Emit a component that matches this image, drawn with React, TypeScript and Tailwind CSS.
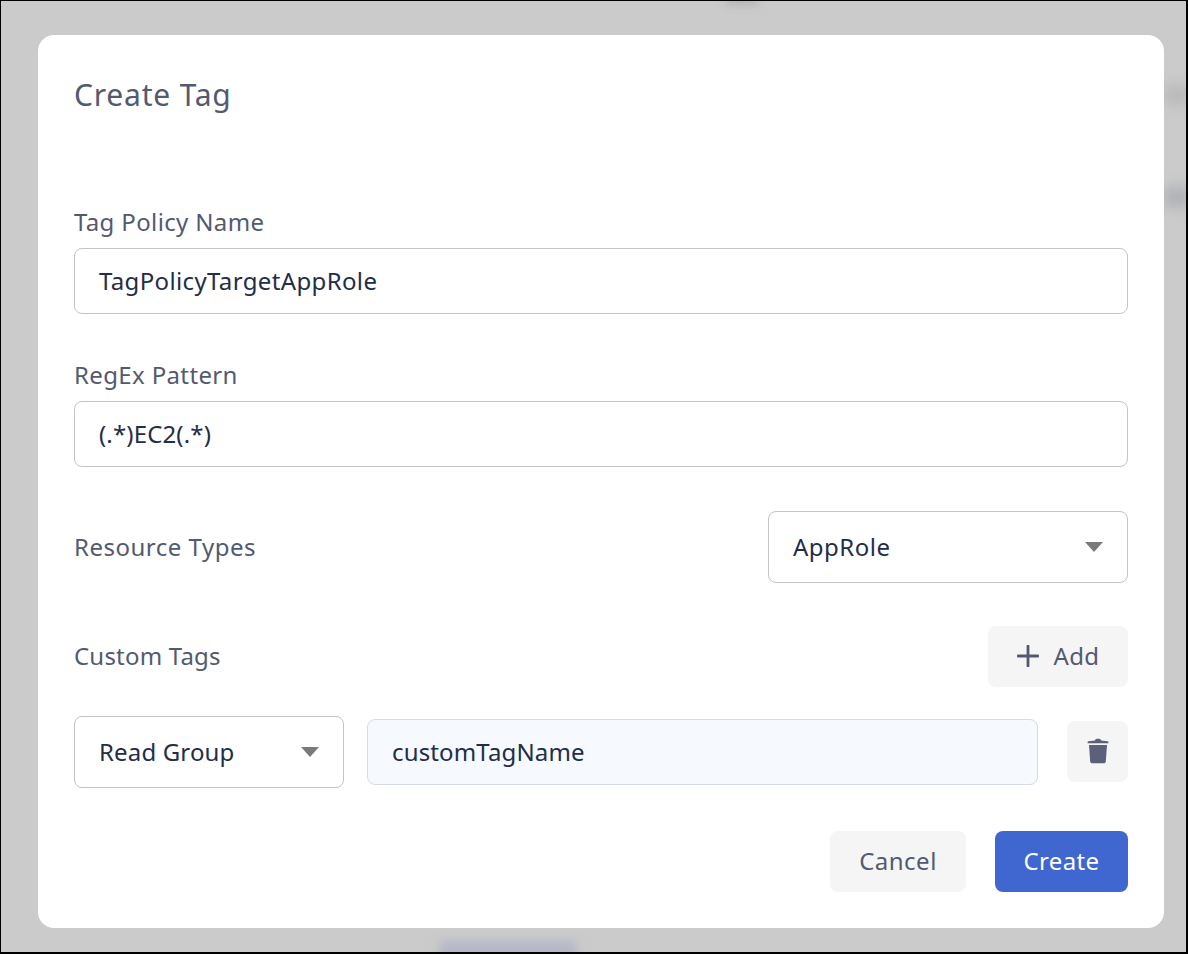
const font = { fontFamily: '"Noto Sans", sans-serif' };

function Caret() {
  return (
    <svg width="18" height="10" viewBox="0 0 18 10" className="shrink-0">
      <path d="M0 0H18L9 10Z" fill="#7a7a7a" />
    </svg>
  );
}

function TrashIcon() {
  return (
    <svg width="22" height="26" viewBox="0 0 22 26">
      <path d="M8 2.500C8 1.400 9 .8 11 .8s3 .6 3 1.700l6.500.8c.6.1.9.5.9 1v.9H.6v-.9c0-.5.3-.9.9-1z" fill="#5a6178" />
      <path d="M2 7h18l-1.200 16.600c-.1 1.100-.9 1.700-1.900 1.700H5.100c-1 0-1.800-.6-1.900-1.700z" fill="#5a6178" />
    </svg>
  );
}

function PlusIcon() {
  return (
    <svg width="22" height="22" viewBox="0 0 22 22">
      <path d="M11 1v20M1 11h20" stroke="#535a70" strokeWidth="2.800" strokeLinecap="round" />
    </svg>
  );
}

function TextBox({ value, className }: { value: string; className: string }) {
  return (
    <div className={`mt-[10px] flex h-[66px] items-center rounded-lg border border-[#c4c4c4] bg-white px-6 text-[24px] text-[#232d48] ${className}`}>
      {value}
    </div>
  );
}

function Select({ value, className }: { value: string; className: string }) {
  return (
    <div className={`flex h-[72px] items-center justify-between rounded-lg border border-[#c4c4c4] bg-white pl-6 pr-6 text-[24px] text-[#232d48] ${className}`}>
      <span>{value}</span>
      <Caret />
    </div>
  );
}

export default function App() {
  return (
    <div className="relative h-[954px] w-[1188px] overflow-hidden border border-b-2 border-r-2 border-black bg-[#cbcbcb] tracking-[0.36px]" style={font}>
      {/* blurred page behind the modal */}
      <div className="absolute left-[725px] top-[-8px] h-3 w-8 bg-[#b4b4b4] blur-[4px]" />
      <div className="absolute left-[1162px] top-[84px] h-5 w-7 bg-[#b9b9b9] blur-[7px]" />
      <div className="absolute left-[1162px] top-[186px] h-5 w-7 bg-[#aeb0b4] blur-[7px]" />
      <div className="absolute left-[438px] top-[940px] h-6 w-[138px] rounded bg-[#b4b8c6] blur-[5px]" />

      <div className="absolute left-[37px] top-[34px] flex h-[893px] w-[1126px] flex-col rounded-2xl bg-white px-9 pt-[38px]">
        <h1 className="text-[30px] leading-[44px] tracking-[0.8px] text-[#535a70]">Create Tag</h1>

        <label className="mt-[89px] text-[24px] leading-8 text-[#535a70]">Tag Policy Name</label>
        <TextBox value="TagPolicyTargetAppRole" className="tracking-[0.36px]" />

        <label className="mt-[45px] text-[24px] leading-8 text-[#535a70]">RegEx Pattern</label>
        <TextBox value="(.*)EC2(.*)" className="tracking-[0.15px]" />

        <div className="mt-11 flex items-center justify-between">
          <span className="text-[24px] tracking-[0.5px] text-[#535a70]">Resource Types</span>
          <Select value="AppRole" className="w-[360px] tracking-[0.5px]" />
        </div>

        <div className="mt-[43px] flex items-center justify-between">
          <span className="pb-0.5 text-[24px] tracking-[0.2px] text-[#535a70]">Custom Tags</span>
          <button className="flex h-[61px] w-[140px] items-center justify-center gap-[15px] rounded-lg bg-[#f5f5f5] pb-0.5 text-[24px] text-[#535a70]">
            <PlusIcon />
            Add
          </button>
        </div>

        <div className="mt-[29px] flex items-center">
          <Select value="Read Group" className="w-[270px] tracking-[0.15px]" />
          <div className="ml-[23px] flex h-[66px] w-[671px] items-center rounded-lg border border-[#d5dbe5] bg-[#f6f9fd] px-6 text-[24px] tracking-[0.15px] text-[#232d48]">
            customTagName
          </div>
          <button className="ml-auto -mt-0.5 flex h-[61px] w-[61px] items-center justify-center rounded-lg bg-[#f5f5f5]">
            <TrashIcon />
          </button>
        </div>

        <div className="mt-[43px] flex justify-end gap-[29px]">
          <button className="h-[61px] w-[136px] rounded-lg bg-[#f5f5f5] pb-0.5 text-[24px] tracking-[0.5px] text-[#535a70]">Cancel</button>
          <button className="h-[61px] w-[133px] rounded-lg bg-[#4067d0] pb-0.5 text-[24px] text-white">Create</button>
        </div>
      </div>
    </div>
  );
}
